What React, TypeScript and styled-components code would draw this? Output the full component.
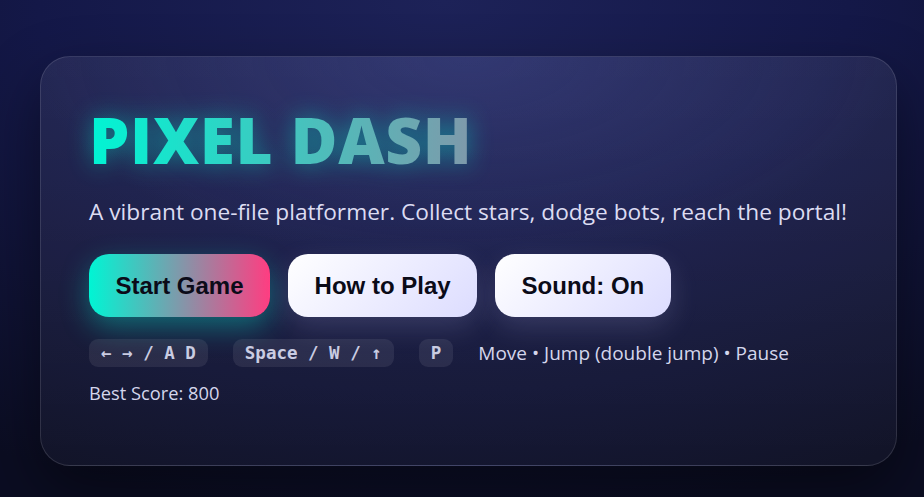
import styled, { createGlobalStyle } from 'styled-components'

const Global = createGlobalStyle`
  html, body {
    margin: 0;
    height: 100%;
  }
  body {
    background:
      radial-gradient(900px 520px at 48% 0%, #1d2258 0%, #141848 45%, #0b0d22 100%);
    font-family: "Open Sans", "Noto Sans", sans-serif;
    overflow: hidden;
  }
`

const Page = styled.main`
  height: 497px;
  box-sizing: border-box;
  padding: 56px 27px 31px 40px;
  display: flex;
`

const Card = styled.section`
  flex: 1;
  box-sizing: border-box;
  padding: 48px 40px 40px 48px;
  border-radius: 30px;
  border: 1px solid rgba(255, 255, 255, 0.12);
  background:
    radial-gradient(620px 300px at 50% 0%, rgba(70, 80, 160, 0.28), transparent 70%),
    linear-gradient(180deg, rgba(255, 255, 255, 0.07), rgba(255, 255, 255, 0.03));
  box-shadow: 0 24px 60px rgba(0, 0, 0, 0.45);
  display: flex;
  flex-direction: column;
`

const Title = styled.h1`
  margin: 0 0 21px;
  font-size: 64px;
  font-weight: 800;
  line-height: 1.1;
  letter-spacing: 0.6px;
  background: linear-gradient(90deg, #00f5d4 0%, #ff3d81 100%);
  -webkit-background-clip: text;
  background-clip: text;
  color: transparent;
  filter: drop-shadow(0 0 12px rgba(0, 245, 212, 0.45));
`

const Tagline = styled.p`
  margin: 0 0 26px;
  font-size: 22.7px;
  line-height: 1.4;
  color: #dcdcf2;
  white-space: nowrap;
`

const Buttons = styled.div`
  display: flex;
  gap: 18px;
  margin-bottom: 22px;
`

const Button = styled.button<{ $primary?: boolean }>`
  font-family: "Liberation Sans", Arial, sans-serif;
  font-weight: 700;
  font-size: 24px;
  line-height: 27px;
  padding: 18px 26.5px;
  border: none;
  border-radius: 20px;
  color: #0b0b18;
  cursor: pointer;
  background: ${p =>
    p.$primary
      ? 'linear-gradient(90deg, #00f5d4 0%, #ff3d81 100%)'
      : 'linear-gradient(135deg, #ffffff 0%, #dcdcff 100%)'};
  box-shadow: ${p =>
    p.$primary
      ? '0 10px 28px rgba(0, 245, 212, 0.35)'
      : '0 10px 28px rgba(200, 200, 255, 0.16)'};
`

const Controls = styled.div`
  display: flex;
  align-items: center;
  gap: 25px;
  margin-bottom: 13px;
`

const Key = styled.kbd`
  font-family: "DejaVu Sans Mono", "Liberation Mono", monospace;
  font-weight: 700;
  font-size: 17.5px;
  line-height: 28px;
  padding: 0 12px;
  border-radius: 9px;
  color: #c9cce2;
  background: rgba(255, 255, 255, 0.08);
  white-space: pre;
`

const Hint = styled.span`
  font-size: 19px;
  color: #d4d6ec;
`

const Score = styled.div`
  font-size: 18.3px;
  color: #d4d6ec;
`

export default function App() {
  return (
    <>
      <Global />
      <Page>
        <Card>
          <Title>PIXEL DASH</Title>
          <Tagline>A vibrant one-file platformer. Collect stars, dodge bots, reach the portal!</Tagline>
          <Buttons>
            <Button $primary>Start Game</Button>
            <Button>How to Play</Button>
            <Button>Sound: On</Button>
          </Buttons>
          <Controls>
            <Key>← → / A D</Key>
            <Key>Space / W / ↑</Key>
            <Key>P</Key>
            <Hint>Move • Jump (double jump) • Pause</Hint>
          </Controls>
          <Score>Best Score: 800</Score>
        </Card>
      </Page>
    </>
  )
}
